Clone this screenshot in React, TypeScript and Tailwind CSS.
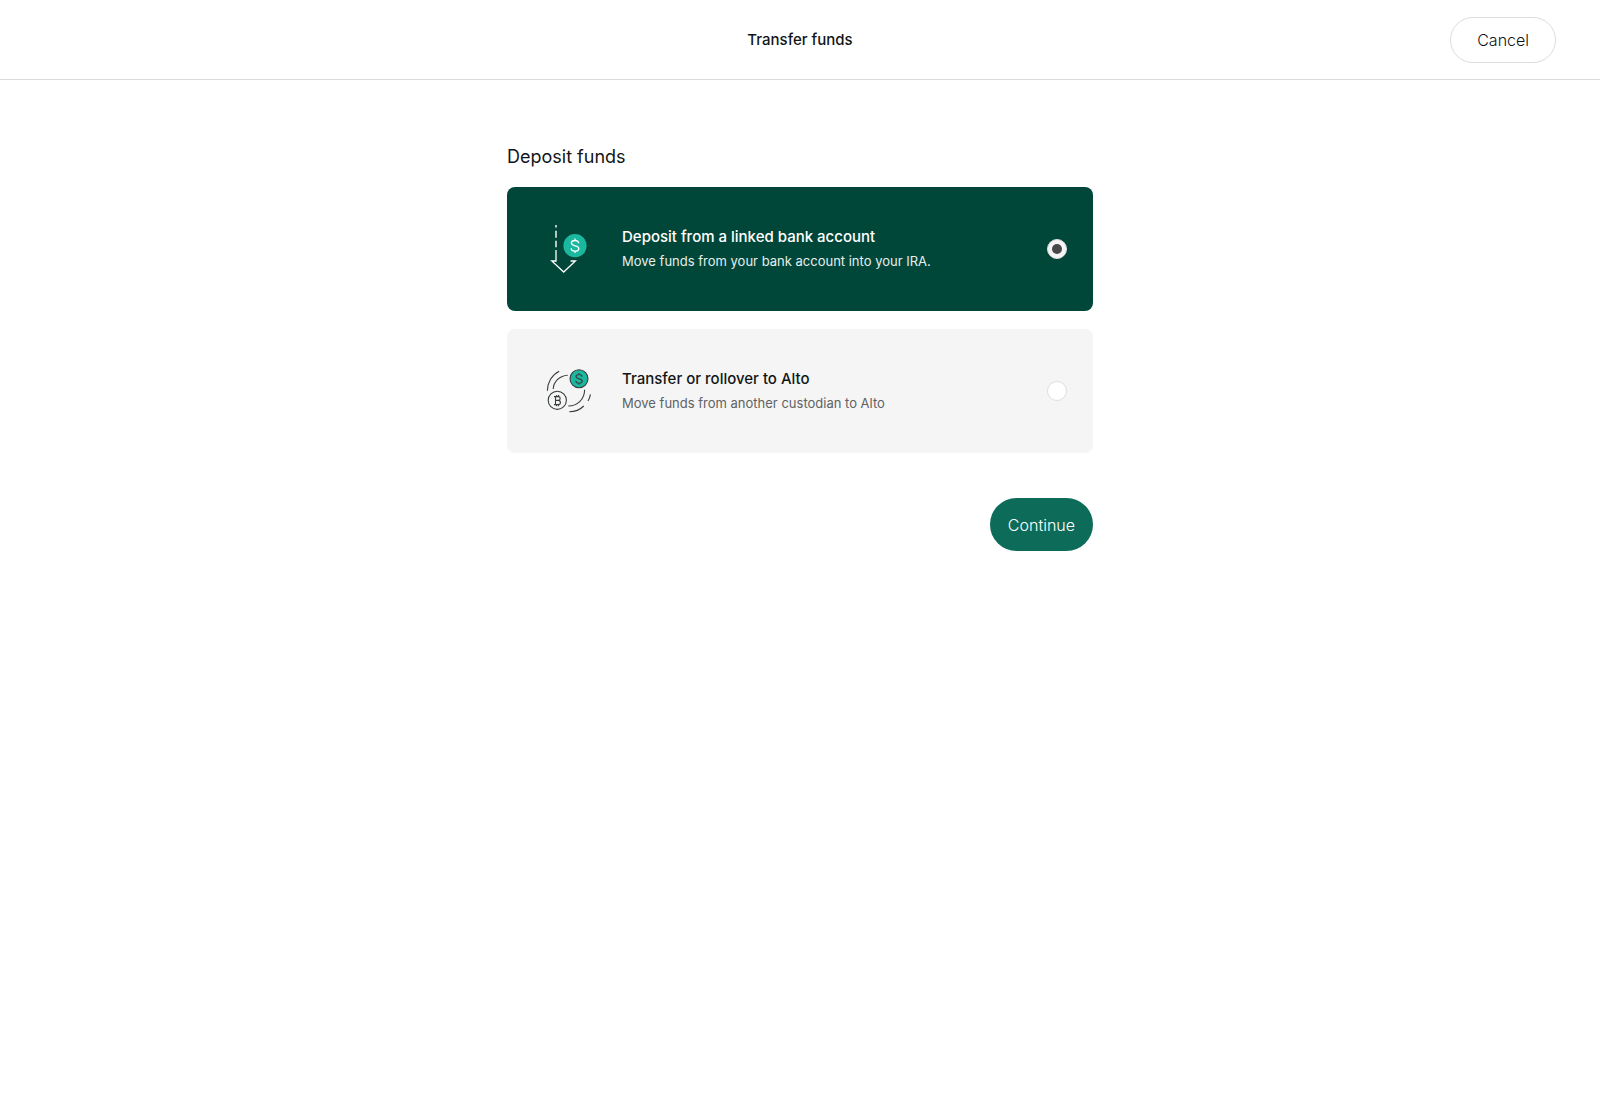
import { useState } from "react";

type Method = "deposit" | "transfer";

function DepositIcon() {
  return (
    <svg width="48" height="48" viewBox="0 0 48 48" fill="none" aria-hidden="true">
      <path d="M11 0v2.5M11 5.7v7M11 15.7v6.6" stroke="#fff" strokeWidth="1.4" />
      <path
        d="M11 25v11H6.8L18.7 47 30.4 36h-4.8"
        stroke="#fff"
        strokeWidth="1.3"
      />
      <circle cx="30" cy="20.7" r="11.6" fill="#1bb8a0" />
      <path
        d="M33.6 18.3c0-1.7-1.4-2.8-3.6-2.8s-3.6 1-3.6 2.6c0 3.7 7.4 1.7 7.4 5.3 0 1.7-1.5 2.7-3.8 2.7s-3.8-1.1-3.8-2.9M30 13.4v2.1M30 26.1v2"
        stroke="#fff"
        strokeWidth="1.3"
      />
    </svg>
  );
}

function TransferIcon() {
  return (
    <svg
      width="48"
      height="48"
      viewBox="0 0 48 48"
      fill="none"
      stroke="#3a3d3f"
      strokeWidth="1.1"
      aria-hidden="true"
    >
      <path d="M2.4 23.7C2.4 15.5 6.8 7.8 14.2 4.2" />
      <path d="M8.2 22C8.6 14.5 14.8 8.6 22.7 8.2" />
      <path d="M39.6 22.7C39.6 32 32.6 39 23.3 39" />
      <path d="M24.3 44.7C30 44.7 35 42.7 38.8 39" />
      <path d="M45.4 27.3C45 29.8 44.3 32 43 34" />
      <circle cx="34" cy="11.7" r="9" fill="#1bb8a0" />
      <path d="M37 9.8c0-1.4-1.2-2.3-3-2.3s-3 .8-3 2.1c0 3.1 6.2 1.4 6.2 4.4 0 1.4-1.3 2.2-3.2 2.2s-3.2-.9-3.2-2.4M34 6v1.5M34 16.2v1.5" />
      <circle cx="12.3" cy="33.3" r="9.1" />
      <path d="M9 29.6h4.3a1.9 1.9 0 0 1 0 3.8h-2.8M13.3 33.4a2.1 2.1 0 0 1 0 4.2H9M10.5 29.6v8M11.6 28v1.6M13.6 28v1.6M11.6 37.6v1.6M13.6 37.6v1.6" />
    </svg>
  );
}

const options = [
  {
    id: "deposit" as Method,
    title: "Deposit from a linked bank account",
    description: "Move funds from your bank account into your IRA.",
    icon: <DepositIcon />,
  },
  {
    id: "transfer" as Method,
    title: "Transfer or rollover to Alto",
    description: "Move funds from another custodian to Alto",
    icon: <TransferIcon />,
  },
];

export default function App() {
  const [method, setMethod] = useState<Method>("deposit");

  return (
    <div className="min-h-screen bg-white font-['Inter',sans-serif] text-[#121516]">
      {/* Header */}
      <header className="grid h-20 grid-cols-[1fr_auto_1fr] items-center border-b border-[#dcdcdc] px-11">
        <h1 className="col-start-2 text-[15px] leading-6 font-medium">
          Transfer funds
        </h1>
        <button
          type="button"
          className="justify-self-end rounded-full border border-[#dcdcdc] px-[26px] py-[10px] text-base font-light"
        >
          Cancel
        </button>
      </header>

      <main className="mx-auto w-full max-w-[586px] pt-16">
        <form onSubmit={(e) => e.preventDefault()}>
          <fieldset>
            <legend className="mb-[18px] text-lg leading-[25px]">
              Deposit funds
            </legend>

            {/* Options */}
            <div className="space-y-[18px]">
              {options.map((option) => {
                const selected = method === option.id;
                return (
                  <label
                    key={option.id}
                    className={`flex h-[124px] cursor-pointer items-center rounded-lg pr-[26px] pl-[38px] ${
                      selected ? "bg-[#00473a] text-white" : "bg-[#f5f5f5]"
                    }`}
                  >
                    {option.icon}
                    <span className="ml-[29px] flex-1">
                      <span className="block text-[15px] leading-6 font-medium">
                        {option.title}
                      </span>
                      <span
                        className={`block text-[13px] leading-6 ${
                          selected ? "text-[#e6eeec]" : "text-[#606263]"
                        }`}
                      >
                        {option.description}
                      </span>
                    </span>
                    <input
                      type="radio"
                      name="method"
                      value={option.id}
                      checked={selected}
                      onChange={() => setMethod(option.id)}
                      className="grid size-5 appearance-none place-items-center rounded-full border border-[#dedede] bg-white before:size-[10px] before:rounded-full checked:bg-[#f5f5f5] checked:before:bg-[#48484a]"
                    />
                  </label>
                );
              })}
            </div>
          </fieldset>

          <div className="mt-[45px] flex justify-end">
            <button
              type="submit"
              className="h-[53px] rounded-full bg-[#0d6b5a] px-[18px] text-base font-light text-white"
            >
              Continue
            </button>
          </div>
        </form>
      </main>
    </div>
  );
}
